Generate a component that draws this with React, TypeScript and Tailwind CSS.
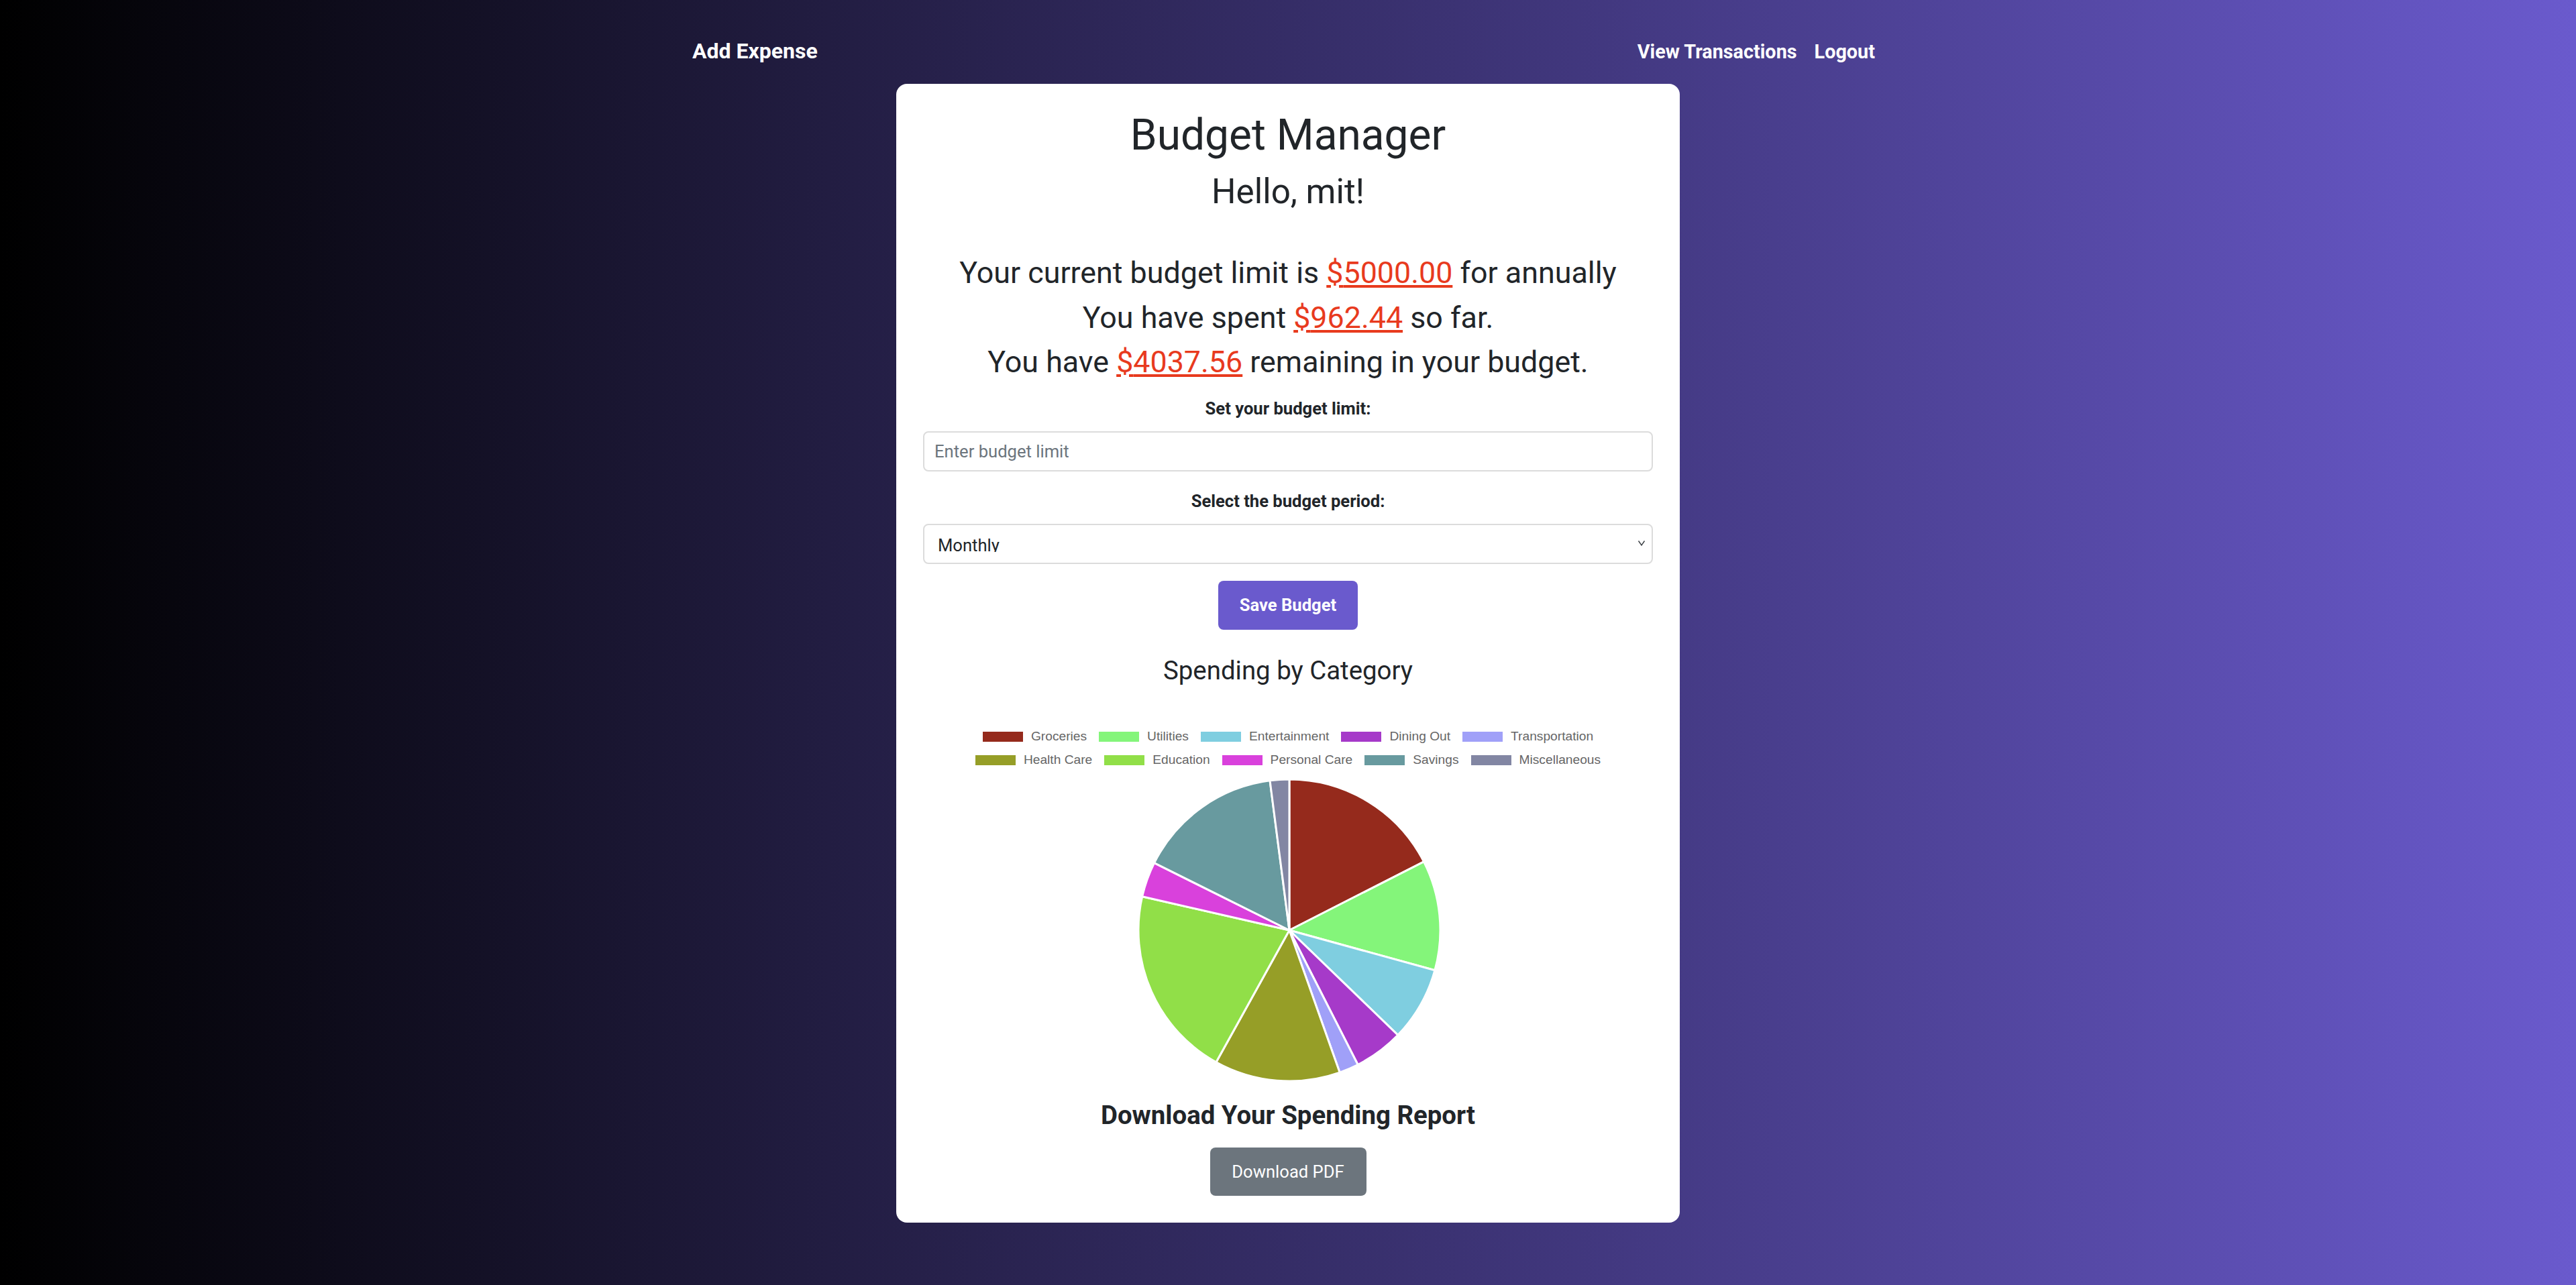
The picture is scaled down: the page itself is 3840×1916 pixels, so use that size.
import React from 'react';

type Category = { name: string; amount: number; color: string };

const categories: Category[] = [
  { name: 'Groceries', amount: 168.43, color: '#952a1c' },
  { name: 'Utilities', amount: 113.35, color: '#84f57a' },
  { name: 'Entertainment', amount: 76.46, color: '#7fcee0' },
  { name: 'Dining Out', amount: 50.8, color: '#a63ac9' },
  { name: 'Transportation', amount: 20.05, color: '#a0a0f8' },
  { name: 'Health Care', amount: 129.66, color: '#969e27' },
  { name: 'Education', amount: 197.56, color: '#91df48' },
  { name: 'Personal Care', amount: 36.36, color: '#d941dc' },
  { name: 'Savings', amount: 149.98, color: '#689a9f' },
  { name: 'Miscellaneous', amount: 19.79, color: '#8286a3' },
];

const budgetLimit = 5000;
const spent = categories.reduce((sum, c) => sum + c.amount, 0);
const remaining = budgetLimit - spent;

const PieChart: React.FC = () => {
  const cx = 230;
  const cy = 226;
  const r = 225;
  let angle = 0;

  const point = (deg: number) => {
    const rad = (deg * Math.PI) / 180;
    return [cx + r * Math.sin(rad), cy - r * Math.cos(rad)];
  };

  return (
    <svg width="460" height="452" viewBox="0 0 460 452" className="mt-[10px] ml-[3px]">
      {categories.map(c => {
        const start = angle;
        const sweep = (c.amount / spent) * 360;
        angle += sweep;
        const [x0, y0] = point(start);
        const [x1, y1] = point(angle);
        const large = sweep > 180 ? 1 : 0;
        return (
          <path
            key={c.name}
            d={`M ${cx} ${cy} L ${x0} ${y0} A ${r} ${r} 0 ${large} 1 ${x1} ${y1} Z`}
            fill={c.color}
            stroke="#ffffff"
            strokeWidth={3}
            strokeLinejoin="round"
          />
        );
      })}
    </svg>
  );
};

const Legend: React.FC = () => {
  const rows = [categories.slice(0, 5), categories.slice(5)];
  return (
    <div className="mt-[54px] flex flex-col items-center font-['Liberation_Sans',Arial,sans-serif] text-[19.2px] text-[#666666]">
      {rows.map((row, i) => (
        <div key={i} className="h-[35px] flex items-center gap-x-[18px]">
          {row.map(c => (
            <div key={c.name} className="flex items-center">
              <span className="w-[60px] h-[15px] block" style={{ backgroundColor: c.color }} />
              <span className="ml-[12px] leading-[22px]">{c.name}</span>
            </div>
          ))}
        </div>
      ))}
    </div>
  );
};

const Amount: React.FC<{ value: number }> = ({ value }) => (
  <span className="text-[#e83a1e] underline">${value.toFixed(2)}</span>
);

export default function App() {
  return (
    <div className="min-h-screen bg-[linear-gradient(to_right,#000000,#6a5acd)] font-['Roboto',sans-serif] text-[#212529] pb-[94px]">
      <nav className="mx-auto w-[1776px] pr-[13px] pt-[52px] flex items-baseline justify-between text-white font-bold leading-[48px]">
        <a href="#" className="text-[32px]">Add Expense</a>
        <div className="flex items-baseline gap-[26px] text-[28.8px]">
          <a href="#">View Transactions</a>
          <a href="#">Logout</a>
        </div>
      </nav>

      <div className="mx-auto mt-[24px] w-[1168px] bg-white rounded-[16px] px-[40px] pt-[40px] pb-[40px] flex flex-col items-center text-center">
        <h1 className="text-[64px] leading-[74px] font-normal">Budget Manager</h1>
        <h2 className="mt-[17px] text-[51.2px] leading-[60px] font-normal">Hello, mit!</h2>

        <div className="mt-[58px] text-[44.8px] leading-[66.5px]">
          <p>
            Your current budget limit is <Amount value={budgetLimit} /> for annually
          </p>
          <p>
            You have spent <Amount value={spent} /> so far.
          </p>
          <p>
            You have <Amount value={remaining} /> remaining in your budget.
          </p>
        </div>

        <label className="mt-[19px] text-[25.6px] leading-[33px] font-bold">Set your budget limit:</label>
        <input
          type="text"
          placeholder="Enter budget limit"
          className="mt-[17px] w-full h-[60px] border-2 border-[#dcdcdc] rounded-[8px] px-[15px] text-[25.6px] text-[#212529] placeholder:text-[#6c757d] outline-none"
        />

        <label className="mt-[28px] text-[25.6px] leading-[33px] font-bold">Select the budget period:</label>
        <div className="mt-[17px] w-full h-[60px] border-2 border-[#dcdcdc] rounded-[8px] relative text-left">
          <div className="h-[40px] pt-[12px] pl-[20px] overflow-hidden text-[25.6px] leading-[36px] text-[#212529]">
            Monthly
          </div>
          <svg
            className="absolute right-[9px] top-[22px]"
            width="12"
            height="10"
            viewBox="0 0 12 10"
            fill="none"
            stroke="#3a3f44"
            strokeWidth="1.4"
          >
            <path d="M1.5 1.5 L6 8 L10.5 1.5" />
          </svg>
        </div>

        <button className="mt-[25px] w-[208px] h-[73px] rounded-[8px] bg-[#6a5acd] text-white text-[25.6px] leading-[36px] font-bold">
          Save Budget
        </button>

        <h3 className="mt-[34px] text-[38.4px] leading-[54px] font-normal">Spending by Category</h3>

        <Legend />
        <PieChart />

        <h3 className="mt-[23px] text-[38.4px] leading-[54px] font-bold">Download Your Spending Report</h3>
        <button className="mt-[21px] w-[233px] h-[72px] rounded-[8px] bg-[#6c757d] text-white text-[25.6px] leading-[36px]">
          Download PDF
        </button>
      </div>
    </div>
  );
}
